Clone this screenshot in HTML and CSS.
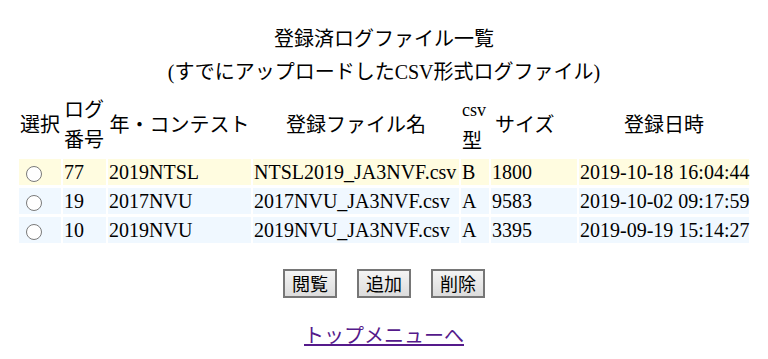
FILE: index.html
```html
<!DOCTYPE html>
<html lang="ja">
<head>
    <meta charset="UTF-8">
    <title>登録済ログファイル一覧</title>
    <link rel="stylesheet" href="styles.css">
</head>
<body>
    <header class="page-title">
        <div>登録済ログファイル一覧</div>
        <div>(すでにアップロードしたCSV形式ログファイル)</div>
    </header>

    <form class="log-form">
        <table class="log-table">
            <colgroup>
                <col style="width:42px">
                <col style="width:43px">
                <col style="width:143px">
                <col style="width:206px">
                <col style="width:28px">
                <col style="width:86px">
                <col style="width:170px">
            </colgroup>
            <thead>
                <tr>
                    <th>選択</th>
                    <th class="left">ログ<br>番号</th>
                    <th>年・コンテスト</th>
                    <th>登録ファイル名</th>
                    <th class="left"><span class="small">csv</span><br>型</th>
                    <th class="left size-head">サイズ</th>
                    <th>登録日時</th>
                </tr>
            </thead>
            <tbody>
                <tr class="row-new">
                    <td><input type="radio" name="log" value="77"></td>
                    <td>77</td>
                    <td>2019NTSL</td>
                    <td>NTSL2019_JA3NVF.csv</td>
                    <td>B</td>
                    <td>1800</td>
                    <td>2019-10-18 16:04:44</td>
                </tr>
                <tr>
                    <td><input type="radio" name="log" value="19"></td>
                    <td>19</td>
                    <td>2017NVU</td>
                    <td>2017NVU_JA3NVF.csv</td>
                    <td>A</td>
                    <td>9583</td>
                    <td>2019-10-02 09:17:59</td>
                </tr>
                <tr>
                    <td><input type="radio" name="log" value="10"></td>
                    <td>10</td>
                    <td>2019NVU</td>
                    <td>2019NVU_JA3NVF.csv</td>
                    <td>A</td>
                    <td>3395</td>
                    <td>2019-09-19 15:14:27</td>
                </tr>
            </tbody>
        </table>

        <div class="actions">
            <button type="button">閲覧</button>
            <button type="button">追加</button>
            <button type="button">削除</button>
        </div>
    </form>

    <p class="back"><a href="#">トップメニューへ</a></p>
</body>
</html>
```

FILE: styles.css
```css
/* Global Styles */
body {
    margin: 0;
    font-family: 'Liberation Serif', 'Noto Sans CJK JP', serif;
    font-size: 20px;
    color: #000;
    background: #fff;
}

.page-title {
    padding-top: 23px;
    text-align: center;
    line-height: 33px;
}

/* Log table */
.log-table {
    table-layout: fixed;
    width: 734px;
    margin: 0 auto;
    border-spacing: 2px 3px;
}

.log-table th {
    font-family: 'Noto Sans CJK JP', sans-serif;
    font-weight: normal;
    line-height: 30px;
    padding: 1px;
    white-space: nowrap;
}

.log-table th.left {
    text-align: left;
}

.log-table th.size-head {
    padding-left: 4px;
}

.log-table th .small {
    font-family: 'Liberation Serif', serif;
    font-size: 18px;
}

.log-table td {
    line-height: 24px;
    padding: 1px;
    white-space: nowrap;
    background: #f0f8ff;
}

.log-table tr.row-new td {
    background: #fffce0;
}

.log-table input[type="radio"] {
    appearance: none;
    -webkit-appearance: none;
    box-sizing: border-box;
    width: 16px;
    height: 16px;
    margin: 0 0 0 6px;
    border: 1.5px solid #7a7a7a;
    border-radius: 50%;
    background: #fff;
    vertical-align: middle;
}

/* Buttons */
.actions {
    display: flex;
    justify-content: center;
    gap: 20px;
    margin-top: 23px;
}

.actions button {
    font-family: 'Noto Sans CJK JP', sans-serif;
    font-size: 18px;
    line-height: 23px;
    padding: 1px 7px;
    color: #000;
    background: linear-gradient(#f4f4f4, #dcdcdc);
    border: 2px solid #767676;
    border-radius: 0;
}

.back {
    margin: 22px 0 0;
    text-align: center;
    font-family: 'Noto Sans CJK JP', sans-serif;
    line-height: 29px;
}

.back a {
    color: #551a8b;
}
```
